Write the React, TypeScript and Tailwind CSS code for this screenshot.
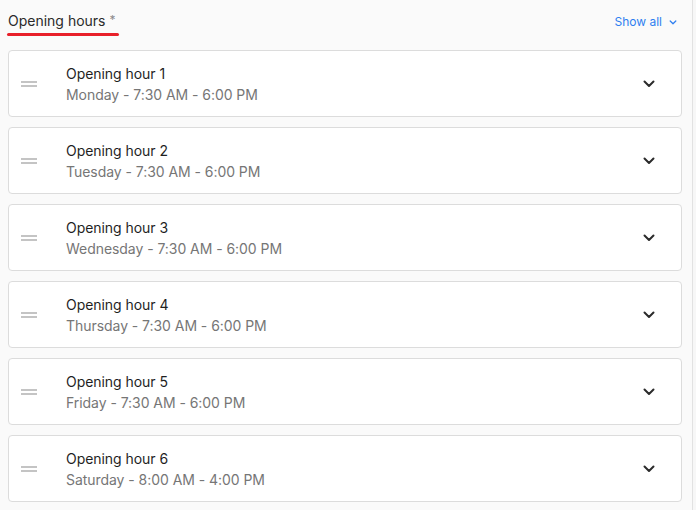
import React from 'react';

const hours = [
  { title: 'Opening hour 1', detail: 'Monday - 7:30 AM - 6:00 PM' },
  { title: 'Opening hour 2', detail: 'Tuesday - 7:30 AM - 6:00 PM' },
  { title: 'Opening hour 3', detail: 'Wednesday - 7:30 AM - 6:00 PM' },
  { title: 'Opening hour 4', detail: 'Thursday - 7:30 AM - 6:00 PM' },
  { title: 'Opening hour 5', detail: 'Friday - 7:30 AM - 6:00 PM' },
  { title: 'Opening hour 6', detail: 'Saturday - 8:00 AM - 4:00 PM' },
];

const Chevron = ({ className }: { className?: string }) => (
  <svg viewBox="0 0 12 8" className={className} fill="none" stroke="currentColor" strokeWidth="2" strokeLinecap="round" strokeLinejoin="round">
    <path d="M1.5 1.5 6 6l4.5-4.5" />
  </svg>
);

const HourCard = ({ title, detail }: { title: string; detail: string }) => (
  <div className="flex h-[67px] items-center rounded border border-[#dcdcdc] bg-white">
    <div className="ml-[12px] flex w-[16px] flex-col gap-[2px]">
      <span className="h-[2px] w-full bg-[#c4c4c4]" />
      <span className="h-[2px] w-full bg-[#c4c4c4]" />
    </div>
    <div className="ml-[29px] flex flex-1 flex-col gap-[1px] pt-[1px] tracking-[-0.05px]">
      <span className="text-[14px] leading-[20px] text-[#1f1f1f]">{title}</span>
      <span className="text-[14px] leading-[20px] text-[#767676]">{detail}</span>
    </div>
    <Chevron className="mr-[26px] h-[8px] w-[12px] text-[#2b2b2b]" />
  </div>
);

const App = () => {
  return (
    <div className="h-[510px] w-[696px] bg-[#f7f7f7] font-['Inter',sans-serif]">
      <div className="h-full w-[693px] border-r border-[#e2e2e2] bg-[#fafafa] pl-[8px] pr-[10px]">
        <div className="flex items-start justify-between pt-[11px]">
          <div className="flex flex-col">
            <div className="flex items-start gap-[4px]">
              <span className="text-[14px] leading-[20px] text-[#2a2a2a]">Opening hours</span>
              <span className="mt-[1px] text-[12px] leading-[16px] text-[#8a8a8a]">*</span>
            </div>
            <span className="-ml-[1px] mt-[2px] h-[3px] w-[112px] rounded-full bg-[#e8202a]" />
          </div>
          <button className="mr-[5px] mt-[1px] flex items-center gap-[7px] text-[12px] leading-[20px] text-[#2f7ff0]">
            Show all
            <Chevron className="h-[5px] w-[8px]" />
          </button>
        </div>
        <div className="mt-[14px] flex flex-col gap-[10px]">
          {hours.map((h) => (
            <HourCard key={h.title} {...h} />
          ))}
        </div>
      </div>
    </div>
  );
};

export default App;
